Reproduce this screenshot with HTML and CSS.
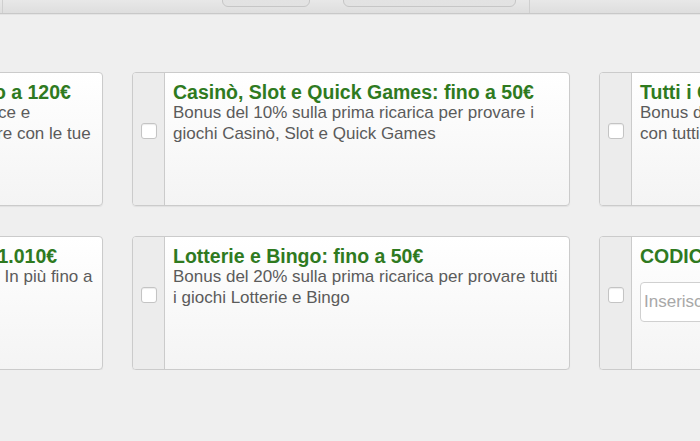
FILE: index.html
```html
<!DOCTYPE html>
<html lang="it">

<head>
    <meta charset="UTF-8">
    <meta name="viewport" content="width=device-width, initial-scale=1.0">
    <title>Bonus di benvenuto</title>
    <link rel="stylesheet" href="styles.css">
</head>

<body>
    <div class="toolbar">
        <div class="toolbar-main">
            <span class="tool-btn btn-short"></span>
            <span class="tool-btn btn-long"></span>
        </div>
        <div class="toolbar-side"></div>
    </div>

    <div class="bonus-grid">
        <label class="bonus-card">
            <span class="bonus-check"><input type="checkbox"></span>
            <span class="bonus-body">
                <span class="bonus-title">Scommesse Sport e Virtual: fino a 120€</span>
                <span class="bonus-text">Bonus del 100% sulla tua ricarica, veloce e immediato e semplice, tutto da spendere con le tue giocate</span>
            </span>
        </label>

        <label class="bonus-card">
            <span class="bonus-check"><input type="checkbox"></span>
            <span class="bonus-body">
                <span class="bonus-title">Casinò, Slot e Quick Games: fino a 50€</span>
                <span class="bonus-text">Bonus del 10% sulla prima ricarica per provare i giochi Casinò, Slot e Quick Games</span>
            </span>
        </label>

        <label class="bonus-card">
            <span class="bonus-check"><input type="checkbox"></span>
            <span class="bonus-body">
                <span class="bonus-title">Tutti i Giochi: fino a 1.000€</span>
                <span class="bonus-text">Bonus del 50% sulla tua prima ricarica da spendere con tutti i prodotti</span>
            </span>
        </label>

        <label class="bonus-card">
            <span class="bonus-check"><input type="checkbox"></span>
            <span class="bonus-body">
                <span class="bonus-title">Pacchetto di Benvenuto: fino a 1.010€</span>
                <span class="bonus-text">Bonus del 50% sulla tua prima ricarica. In più fino a 10€ di bonus</span>
            </span>
        </label>

        <label class="bonus-card">
            <span class="bonus-check"><input type="checkbox"></span>
            <span class="bonus-body">
                <span class="bonus-title">Lotterie e Bingo: fino a 50€</span>
                <span class="bonus-text">Bonus del 20% sulla prima ricarica per provare tutti i giochi Lotterie e Bingo</span>
            </span>
        </label>

        <label class="bonus-card">
            <span class="bonus-check"><input type="checkbox"></span>
            <span class="bonus-body">
                <span class="bonus-title">CODICE PROMO</span>
                <input class="promo-input" type="text" placeholder="Inserisci il codice promozionale">
            </span>
        </label>
    </div>
</body>

</html>
```

FILE: styles.css
```css
body {
    margin: 0;
    background-color: #efefef;
    font-family: "Liberation Sans", Arial, Helvetica, sans-serif;
    overflow: hidden;
}

.toolbar {
    display: flex;
    height: 13px;
    background: linear-gradient(#e8e8e8, #dedede);
    border-bottom: 1px solid #c8c8c8;
    box-shadow: 0 1px 0 #e4e4e4;
    overflow: hidden;
}

.toolbar-main {
    display: flex;
    align-items: flex-end;
    width: 528px;
    margin-left: 2px;
    padding-left: 219px;
    border-left: 1px solid #cfcfcf;
    border-right: 1px solid #cfcfcf;
    box-sizing: border-box;
}

.toolbar-side {
    flex: 1;
}

.tool-btn {
    height: 30px;
    margin-bottom: 6px;
    border: 1px solid #c6c6c6;
    border-radius: 6px;
    background: linear-gradient(#e6e6e6, #e2e2e2);
    box-sizing: border-box;
}

.btn-short {
    width: 88px;
    margin-right: 33px;
}

.btn-long {
    width: 173px;
}

.bonus-grid {
    display: grid;
    grid-template-columns: repeat(3, 438px);
    grid-auto-rows: 134px;
    column-gap: 29px;
    row-gap: 30px;
    justify-content: center;
    padding: 58px 0 0 2px;
}

.bonus-card {
    display: flex;
    border: 1px solid #cbcbcb;
    border-radius: 4px;
    background: linear-gradient(#ffffff, #f4f4f4);
    box-shadow: 0 1px 1px rgba(0, 0, 0, 0.06);
    overflow: hidden;
    cursor: pointer;
}

.bonus-check {
    display: flex;
    justify-content: center;
    width: 31px;
    padding-top: 50px;
    background-color: #ececec;
    border-right: 1px solid #cbcbcb;
    flex-shrink: 0;
}

.bonus-check input {
    appearance: none;
    width: 16px;
    height: 16px;
    margin: 0;
    border: 1px solid #c4c4c4;
    border-radius: 3px;
    background-color: #fff;
    box-shadow: inset 0 1px 1px rgba(0, 0, 0, 0.08);
}

.bonus-body {
    display: flex;
    flex-direction: column;
    padding: 9px 3px 0 8px;
    min-width: 0;
}

.bonus-title {
    font-size: 19.5px;
    font-weight: bold;
    line-height: 20px;
    color: #2f7a1f;
    white-space: nowrap;
}

.bonus-text {
    font-size: 17px;
    line-height: 21px;
    color: #5b5b5b;
}

.promo-input {
    width: 260px;
    height: 40px;
    margin-top: 16px;
    padding: 0 3px;
    border: 1px solid #d0d0d0;
    border-radius: 4px;
    font-family: inherit;
    font-size: 17px;
    color: #555;
    box-sizing: border-box;
}

.promo-input::placeholder {
    color: #a8a8a8;
}
```
